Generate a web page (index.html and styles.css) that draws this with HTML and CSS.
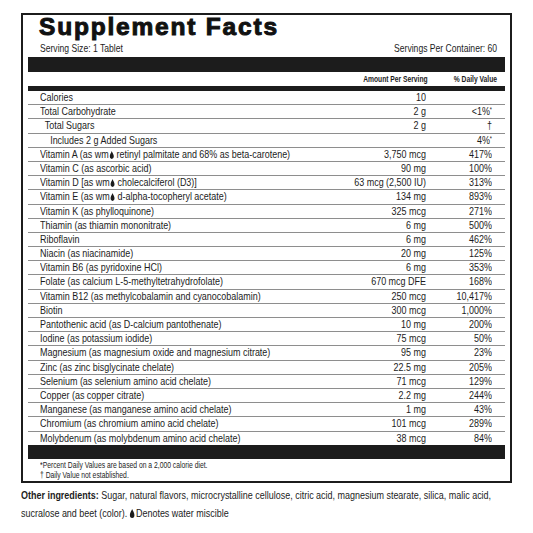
FILE: index.html
```html
<!DOCTYPE html>
<html lang="en">
<head>
  <meta charset="UTF-8">
  <meta name="viewport" content="width=device-width, initial-scale=1.0">
  <title>Supplement Facts</title>
  <link rel="stylesheet" href="styles.css">
</head>
<body>
  <div class="panel">
    <h1 class="title">Supplement Facts</h1>
    <div class="serving">
      <span class="cond left">Serving Size: 1 Tablet</span>
      <span class="cond right">Servings Per Container: 60</span>
    </div>
    <div class="bar bar-big"></div>
    <div class="head-row">
      <span class="head-amt">Amount Per Serving</span>
      <span class="head-dv">% Daily Value</span>
    </div>
    <div class="bar bar-thin"></div>
    <div class="rows" id="rows"></div>
    <div class="bar bar-big"></div>
    <div class="notes">
      <div class="cond left">*Percent Daily Values are based on a 2,000 calorie diet.</div>
      <div class="cond left">&dagger; Daily Value not established.</div>
    </div>
  </div>
  <div class="other-wrap">
    <p class="other"><b>Other ingredients:</b> Sugar, natural flavors, microcrystalline cellulose, citric acid, magnesium stearate, silica, malic acid,<br>sucralose and beet (color). <span class="drop-wrap"></span>Denotes water miscible</p>
  </div>
  <script>
    // --- Data ---
    const DROP = '<svg class="drop" viewBox="0 0 6 9"><path d="M3 0C2.4 1.6 0 4 0 6a3 3 0 0 0 6 0C6 4 3.6 1.6 3 0z"/></svg>';
    const ROWS = [
      ['Calories', '10', '', 0],
      ['Total Carbohydrate', '2 g', '&lt;1%<sup>*</sup>', 0],
      ['Total Sugars', '2 g', '&dagger;', 1],
      ['Includes 2 g Added Sugars', '', '4%<sup>*</sup>', 2],
      ['Vitamin A (as wm{D} retinyl palmitate and 68% as beta-carotene)', '3,750 mcg', '417%', 0],
      ['Vitamin C (as ascorbic acid)', '90 mg', '100%', 0],
      ['Vitamin D [as wm{D} cholecalciferol (D3)]', '63 mcg (2,500 IU)', '313%', 0],
      ['Vitamin E (as wm{D} d-alpha-tocopheryl acetate)', '134 mg', '893%', 0],
      ['Vitamin K (as phylloquinone)', '325 mcg', '271%', 0],
      ['Thiamin (as thiamin mononitrate)', '6 mg', '500%', 0],
      ['Riboflavin', '6 mg', '462%', 0],
      ['Niacin (as niacinamide)', '20 mg', '125%', 0],
      ['Vitamin B6 (as pyridoxine HCl)', '6 mg', '353%', 0],
      ['Folate (as calcium L-5-methyltetrahydrofolate)', '670 mcg DFE', '168%', 0],
      ['Vitamin B12 (as methylcobalamin and cyanocobalamin)', '250 mcg', '10,417%', 0],
      ['Biotin', '300 mcg', '1,000%', 0],
      ['Pantothenic acid (as D-calcium pantothenate)', '10 mg', '200%', 0],
      ['Iodine (as potassium iodide)', '75 mcg', '50%', 0],
      ['Magnesium (as magnesium oxide and magnesium citrate)', '95 mg', '23%', 0],
      ['Zinc (as zinc bisglycinate chelate)', '22.5 mg', '205%', 0],
      ['Selenium (as selenium amino acid chelate)', '71 mcg', '129%', 0],
      ['Copper (as copper citrate)', '2.2 mg', '244%', 0],
      ['Manganese (as manganese amino acid chelate)', '1 mg', '43%', 0],
      ['Chromium (as chromium amino acid chelate)', '101 mcg', '289%', 0],
      ['Molybdenum (as molybdenum amino acid chelate)', '38 mcg', '84%', 0]
    ];
    // --- Render ---
    const rows = document.getElementById('rows');
    ROWS.forEach(([name, amt, dv, indent]) => {
      const r = document.createElement('div');
      r.className = 'row';
      r.innerHTML = `<span class="name indent-${indent}">${name.replace('{D}', DROP)}</span><span class="amt">${amt}</span><span class="dv">${dv}</span>`;
      rows.appendChild(r);
    });
    document.querySelector('.drop-wrap').innerHTML = DROP;
  </script>
</body>
</html>
```

FILE: styles.css
```css
html, body {
  margin: 0;
  padding: 0;
  background: #fff;
  color: #1c1c1c;
  font-family: 'Liberation Sans', Arial, sans-serif;
}
body {
  padding: 13px 21px 0 21px;
}
/* condensed look: Liberation Sans squeezed sideways */
.cond, .name, .amt, .dv, .head-amt, .head-dv {
  display: inline-block;
  white-space: nowrap;
  transform: scaleX(0.78);
}
.left, .name {
  transform-origin: left center;
}
.right, .amt, .dv, .head-amt, .head-dv {
  transform-origin: right center;
}
.panel {
  border: 2px solid #1c1c1c;
  padding: 0 5px;
}
.title {
  margin: 0;
  padding: 0 0 0 11px;
  font-weight: 900;
  font-size: 24.5px;
  line-height: 24px;
  letter-spacing: 1.8px;
  -webkit-text-stroke: 1px #111;
  color: #111;
}
.serving {
  display: flex;
  justify-content: space-between;
  padding: 3px 8px 2px 12px;
  font-size: 11px;
  line-height: 13px;
}
.bar {
  background: #1c1c1c;
}
.bar-big {
  height: 15px;
}
.rows + .bar-big {
  height: 14px;
}
.bar-thin {
  height: 5px;
}
.head-row {
  display: grid;
  grid-template-columns: minmax(0, 1fr) auto 69px;
  padding: 0 8px 0 12px;
  font-weight: bold;
  font-size: 8.6px;
  line-height: 14px;
  text-align: right;
}
.head-amt {
  grid-column: 2;
}
.rows {
  font-size: 11.5px;
}
.row {
  display: grid;
  grid-template-columns: minmax(0, 1fr) 115px 66px;
  padding: 0 13px 0 12px;
  height: 13.2px;
  line-height: 13px;
  border-bottom: 1px solid #8e8e8e;
}
.row:last-child {
  border-bottom: none;
}
.amt, .dv {
  text-align: right;
}
.row .dv {
  margin-left: 2px;
}
.dv sup {
  font-size: 7px;
  line-height: 0;
  vertical-align: 3px;
}
.indent-1 {
  padding-left: 6px;
}
.indent-2 {
  padding-left: 13px;
}
.drop {
  width: 6px;
  height: 8px;
  fill: #1c1c1c;
  vertical-align: -1px;
  margin-left: 1px;
}
.notes {
  padding: 1px 0 1px 12px;
  font-size: 8.7px;
  line-height: 10px;
}
.notes .cond {
  display: block;
}
.other-wrap {
  overflow: hidden;
}
.other {
  width: 628px;
  margin: 3px 0 0 0;
  font-size: 11.5px;
  line-height: 18px;
  transform: scaleX(0.78);
  transform-origin: left top;
}
.other .drop {
  width: 7px;
  height: 9px;
  margin: 0 1px 0 0;
}
```
